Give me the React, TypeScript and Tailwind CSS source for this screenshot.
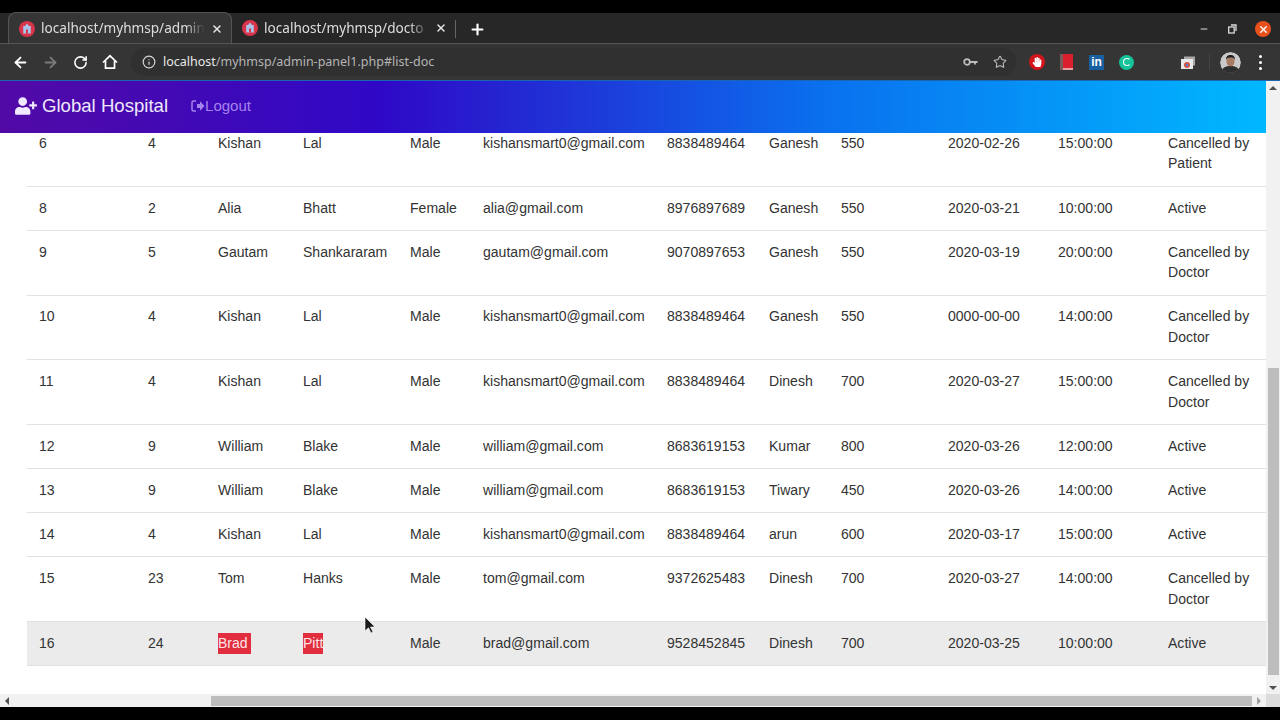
import React from "react";
import { ArrowLeft, ArrowRight, RotateCw, Star, Plus, X, Minus, Info } from "lucide-react";
import { FaUserPlus, FaHandPaper } from "react-icons/fa";

type Row = [string, string, string, string, string, string, string, string, string, string, string, string];
const rows: Row[] = [
  ["6", "4", "Kishan", "Lal", "Male", "kishansmart0@gmail.com", "8838489464", "Ganesh", "550", "2020-02-26", "15:00:00", "Cancelled by Patient"],
  ["8", "2", "Alia", "Bhatt", "Female", "alia@gmail.com", "8976897689", "Ganesh", "550", "2020-03-21", "10:00:00", "Active"],
  ["9", "5", "Gautam", "Shankararam", "Male", "gautam@gmail.com", "9070897653", "Ganesh", "550", "2020-03-19", "20:00:00", "Cancelled by Doctor"],
  ["10", "4", "Kishan", "Lal", "Male", "kishansmart0@gmail.com", "8838489464", "Ganesh", "550", "0000-00-00", "14:00:00", "Cancelled by Doctor"],
  ["11", "4", "Kishan", "Lal", "Male", "kishansmart0@gmail.com", "8838489464", "Dinesh", "700", "2020-03-27", "15:00:00", "Cancelled by Doctor"],
  ["12", "9", "William", "Blake", "Male", "william@gmail.com", "8683619153", "Kumar", "800", "2020-03-26", "12:00:00", "Active"],
  ["13", "9", "William", "Blake", "Male", "william@gmail.com", "8683619153", "Tiwary", "450", "2020-03-26", "14:00:00", "Active"],
  ["14", "4", "Kishan", "Lal", "Male", "kishansmart0@gmail.com", "8838489464", "arun", "600", "2020-03-17", "15:00:00", "Active"],
  ["15", "23", "Tom", "Hanks", "Male", "tom@gmail.com", "9372625483", "Dinesh", "700", "2020-03-27", "14:00:00", "Cancelled by Doctor"],
  ["16", "24", "Brad", "Pitt", "Male", "brad@gmail.com", "9528452845", "Dinesh", "700", "2020-03-25", "10:00:00", "Active"],
];
const widths = [109, 70, 85, 107, 73, 184, 102, 72, 107, 110, 110, 110];

function Favicon() {
  return (
    <svg width="16" height="16" viewBox="0 0 16 16" className="shrink-0">
      <circle cx="8" cy="8" r="8" fill="#d8344a" />
      <path d="M8 2.500l2 2.500h1.800V12.500H4.200V5H6z" fill="#a9c4ea" />
      <rect x="7" y="8.500" width="2" height="4" fill="#d8344a" />
    </svg>
  );
}

function Tab({ label, active }: { label: string; active: boolean }) {
  return (
    <div className={`flex items-center h-[31px] w-[224px] pl-[10px] pr-[8px] pt-[1px] ${active ? "bg-[#353535] rounded-t-[8px] border-t border-x border-[#555555]" : ""}`}>
      <Favicon />
      <span className="ml-[6px] w-[165px] whitespace-nowrap text-[13.600px] text-[#dedede] [mask-image:linear-gradient(to_right,black_88%,transparent)]">{label}</span>
      <X size={12} strokeWidth={3} className="ml-[6px] text-[#e6e6e6]" />
    </div>
  );
}

export default function App() {
  return (
    <div className="h-[720px] w-[1280px] overflow-hidden bg-black flex flex-col relative font-['Liberation_Sans',Arial,sans-serif]">
      <div className="h-[13px] shrink-0 bg-black" />
      {/* tab strip */}
      <div className="h-[31px] shrink-0 bg-[#272727] flex items-end pl-[8px] font-['Noto_Sans',sans-serif] border-b border-[#555555]">
        <Tab label="localhost/myhmsp/admin" active />
        <Tab label="localhost/myhmsp/docto" active={false} />
        <div className="w-px h-[18px] bg-[#666666] self-center mt-[2px] -ml-px" />
        <Plus size={17} strokeWidth={3} className="text-white self-center mt-[2px] ml-[13px]" />
        <div className="ml-auto self-center mt-[2px] flex items-center pr-[9px]">
          <Minus size={10} strokeWidth={2.5} className="text-[#dddddd] mr-[19px]" />
          <svg width="9" height="10" viewBox="0 0 9 10" className="mr-[18px]" fill="none" stroke="#dddddd" strokeWidth="1.300">
            <rect x="0.700" y="3" width="5.500" height="6" />
            <path d="M3 1h5v6" />
          </svg>
          <div className="w-[16px] h-[16px] rounded-full bg-[#e8501c] flex items-center justify-center">
            <X size={11} strokeWidth={3} className="text-white" />
          </div>
        </div>
      </div>
      {/* toolbar */}
      <div className="h-[36px] shrink-0 bg-[#353535] flex items-center font-['Noto_Sans',sans-serif]">
        <ArrowLeft size={17} strokeWidth={2.5} className="text-white ml-[12px]" />
        <ArrowRight size={17} strokeWidth={2.5} className="text-[#7a7a7a] ml-[13px]" />
        <RotateCw size={15} strokeWidth={2.5} className="text-white ml-[14px]" />
        <svg width="16" height="16" viewBox="0 0 16 16" fill="none" stroke="#ffffff" strokeWidth="1.700" className="ml-[14px]">
          <path d="M1 8.500 8 1.800l7 6.700M3.500 7v7.200h9V7" />
        </svg>
        <div className="ml-[13px] h-[28px] w-[885px] rounded-full bg-[#303030] flex items-center pl-[11px] pr-[9px]">
          <Info size={14} strokeWidth={2} className="text-[#d8d8d8]" />
          <span className="ml-[7px] text-[12.500px] text-[#b5b5b5]"><span className="text-[#e8e8e8]">localhost</span>/myhmsp/admin-panel1.php#list-doc</span>
          <svg width="15" height="14" viewBox="0 0 15 14" fill="none" className="ml-auto mr-[15px]" stroke="#bdbdbd" strokeWidth="1.800">
            <circle cx="4" cy="7" r="2.800" />
            <path d="M6.800 7H14.500M12 7v2.500" />
          </svg>
          <Star size={14} strokeWidth={1.800} className="text-[#bdbdbd]" />
        </div>
        <div className="ml-[13px] w-[16px] h-[16px] rounded-full bg-[#d3141c] flex items-center justify-center">
          <FaHandPaper size={10} className="text-white" />
        </div>
        <div className="ml-[15px] w-[13px] h-[16px] bg-[#d9202c] border-l-[3px] border-[#7d5a5a] flex items-end">
          <div className="w-full h-[2px] bg-[#e8a0a0]" />
        </div>
        <div className="ml-[16px] w-[15px] h-[15px] bg-[#1a5fa0] flex items-center justify-center text-white text-[12px] font-bold font-['Liberation_Sans',sans-serif] leading-none">in</div>
        <div className="ml-[15px] w-[15px] h-[15px] rounded-full bg-[#15c39a] flex items-center justify-center">
          <div className="w-[8px] h-[8px] rounded-full border-[1.500px] border-white border-r-transparent" />
        </div>
        <svg width="14" height="13" viewBox="0 0 14 13" className="ml-[47px]">
          <rect x="3" y="0.500" width="11" height="9" fill="#a8a8a8" />
          <rect x="0" y="3" width="12" height="10" fill="#e8e8e8" />
          <circle cx="6" cy="9" r="3" fill="#d8503c" />
          <circle cx="6" cy="9" r="1.300" fill="#4a80d8" />
        </svg>
        <div className="w-px h-[16px] bg-[#444444] ml-[14px]" />
        <svg width="21" height="21" viewBox="0 0 21 21" className="ml-[10px] rounded-full">
          <circle cx="10.500" cy="10.500" r="10.500" fill="#c9c9c9" />
          <path d="M1 21c1-6 5-7 9.500-7s8.500 1 9.500 7z" fill="#2e2e2e" />
          <ellipse cx="10.500" cy="9.500" rx="4" ry="5" fill="#a87a62" />
          <path d="M6 8c0-4 2-5 4.500-5S15 4 15 8c-1-2-2-2.500-4.500-2.500S7 6 6 8z" fill="#1d1d1d" />
        </svg>
        <div className="ml-[18px] flex flex-col gap-[3px]">
          <div className="w-[3px] h-[3px] rounded-full bg-white" />
          <div className="w-[3px] h-[3px] rounded-full bg-white" />
          <div className="w-[3px] h-[3px] rounded-full bg-white" />
        </div>
      </div>
      {/* page */}
      <div className="flex-1 min-h-0 flex flex-col bg-white border-t border-[#1a66b0]">
        <div className="flex-1 min-h-0 flex">
          <div className="flex-1 min-w-0 flex flex-col">
            <nav className="h-[52px] shrink-0 flex items-center pb-[2px] pl-[15px] bg-[linear-gradient(to_right,#520aa6,#2f08c6_30%,#0a70ee_65%,#00b8ff)]">
              <FaUserPlus size={22} className="text-[#f0e8ff]" />
              <span className="ml-[5px] text-[18.600px] text-[#eee8fb]">Global Hospital</span>
              <div className="ml-[23px] flex items-center text-[#a583ee] text-[15px]">
                <svg width="14" height="12" viewBox="0 0 14 12" fill="none">
                  <path d="M5 1H2.500A1.500 1.500 0 0 0 1 2.500v7A1.500 1.500 0 0 0 2.500 11H5" stroke="#a583ee" strokeWidth="1.500" />
                  <path d="M6 4h3V1.300L13.500 6 9 10.700V8H6z" fill="#a583ee" />
                </svg>
                <span>Logout</span>
              </div>
            </nav>
            <div className="flex-1 min-h-0 overflow-hidden pl-[27px]">
              <table className="-mt-[11px] table-fixed border-collapse w-[1239px] text-[14.050px] leading-[20.600px] text-[#333333]">
                <colgroup>
                  {widths.map((w, i) => (
                    <col key={i} style={{ width: w }} />
                  ))}
                </colgroup>
                <tbody>
                  {rows.map((r) => {
                    const hover = r[0] === "16";
                    return (
                      <tr key={r[0]} className={`border-b border-[#dee2e6] ${hover ? "bg-[#ebebeb]" : ""}`}>
                        {r.map((c, i) => (
                          <td key={i} className="pl-[12px] pr-0 pt-[10.900px] pb-[11.650px] align-top">
                            {hover && i === 2 ? (
                              <span className="bg-[#e12d3d] text-[#fbe4e6] inline-block w-[33px]">{c}</span>
                            ) : hover && i === 3 ? (
                              <span className="bg-[#e12d3d] text-[#fbe4e6] inline-block w-[20px]">{c}</span>
                            ) : (
                              c
                            )}
                          </td>
                        ))}
                      </tr>
                    );
                  })}
                </tbody>
              </table>
            </div>
          </div>
          {/* vertical scrollbar */}
          <div className="w-[14px] shrink-0 bg-[#f1f1f1] flex flex-col items-center">
            <div className="h-[13px] shrink-0 flex items-center justify-center">
              <div className="w-0 h-0 border-x-[4px] border-x-transparent border-b-[4px] border-b-[#505050]" />
            </div>
            <div className="h-[274px] shrink-0" />
            <div className="w-[11px] h-[307px] shrink-0 bg-[#bdbdbd]" />
            <div className="flex-1" />
            <div className="h-[13px] shrink-0 flex items-center justify-center">
              <div className="w-0 h-0 border-x-[4px] border-x-transparent border-t-[4px] border-t-[#505050]" />
            </div>
          </div>
        </div>
        {/* horizontal scrollbar */}
        <div className="h-[13px] shrink-0 bg-[#f1f1f1] flex items-center">
          <div className="w-[14px] flex justify-center">
            <div className="w-0 h-0 border-y-[4px] border-y-transparent border-r-[4px] border-r-[#505050]" />
          </div>
          <div className="w-[197px]" />
          <div className="w-[1041px] h-[10px] bg-[#bdbdbd]" />
          <div className="w-[14px] flex justify-center">
            <div className="w-0 h-0 border-y-[4px] border-y-transparent border-l-[4px] border-l-[#a0a0a0]" />
          </div>
          <div className="w-[14px] h-full bg-[#dcdcdc]" />
        </div>
      </div>
      <div className="h-[13px] shrink-0 bg-black" />
      {/* mouse cursor */}
      <svg width="12" height="18" viewBox="0 0 12 18" className="absolute left-[364px] top-[616px]">
        <path d="M1 1v14l3.500-3.200L7 17l2-1-2.500-5H11z" fill="#1a1a1a" stroke="#ffffff" strokeWidth="0.600" />
      </svg>
    </div>
  );
}
